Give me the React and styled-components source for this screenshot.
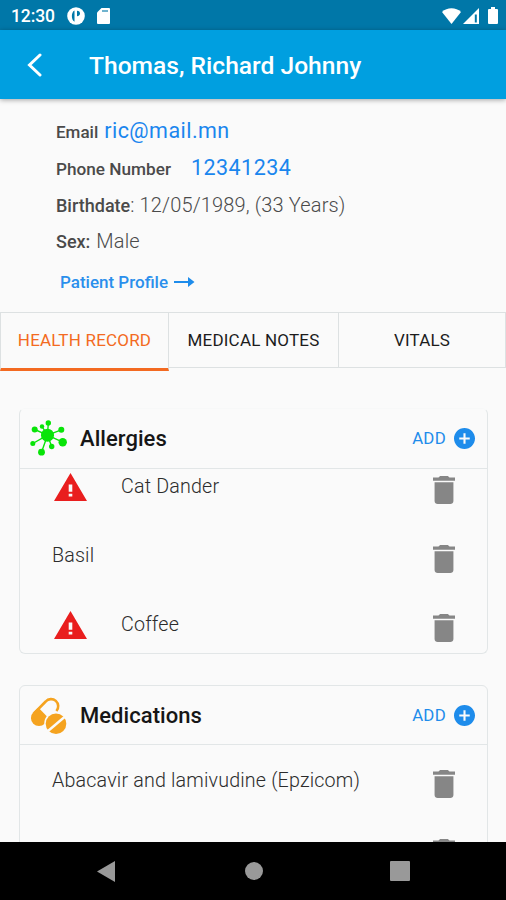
import styled, { createGlobalStyle } from 'styled-components';

const GlobalStyle = createGlobalStyle`
    body {
        margin: 0;
        background-color: #fafafa;
        font-family: Roboto, sans-serif;
    }
`;

const Screen = styled.div`
    display: flex;
    flex-direction: column;
    width: 506px;
    height: 900px;
    overflow: hidden;
    background-color: #fafafa;
`;

const StatusBar = styled.div`
    display: flex;
    align-items: center;
    justify-content: space-between;
    box-sizing: border-box;
    flex: none;
    height: 30px;
    padding: 1px 7px 0 11px;
    background-color: #0077a8;
    color: #fff;
`;

const StatusGroup = styled.div`
    display: flex;
    align-items: center;
    gap: ${props => props.$gap};
`;

const Clock = styled.span`
    font-size: 17.5px;
    font-weight: 500;
    line-height: 28px;
    letter-spacing: -0.1px;
`;

const AppBar = styled.header`
    display: flex;
    align-items: center;
    box-sizing: border-box;
    flex: none;
    height: 69px;
    padding: 1px 0 0 26px;
    gap: 47px;
    background-color: #009fe0;
    box-shadow: 0 1px 5px rgba(0, 0, 0, 0.35);
    color: #fff;
`;

const PatientName = styled.h1`
    margin: 0;
    padding-top: 1px;
    font-size: 24.6px;
    font-weight: 500;
    line-height: 30px;
`;

const Content = styled.main`
    flex: none;
    height: 743px;
    overflow: hidden;
`;

const Details = styled.section`
    display: flex;
    flex-direction: column;
    box-sizing: border-box;
    height: 213px;
    padding: 17px 0 0 56px;
`;

const Detail = styled.div`
    display: flex;
    align-items: baseline;
    height: ${props => props.$height};
    line-height: 30px;
    white-space: pre;
`;

const Label = styled.span`
    font-size: ${props => props.$size || '17px'};
    font-weight: 500;
    color: #4a4a4a;
`;

const Value = styled.span`
    font-size: ${props => (props.$link ? '21.5px' : '20px')};
    font-weight: ${props => (props.$link ? 400 : 300)};
    letter-spacing: ${props => (props.$link ? '0.45px' : '0.15px')};
    color: ${props => (props.$link ? '#1a86ee' : '#4a4a4a')};
    margin-left: ${props => props.$left || '0'};
`;

const ProfileLink = styled.a`
    display: flex;
    align-items: center;
    gap: 6px;
    padding: 0 0 0 4px;
    font-size: 17px;
    font-weight: 500;
    line-height: 30px;
    color: #2a8fec;
`;

const Tabs = styled.nav`
    display: grid;
    grid-template-columns: 169px 170px 167px;
    height: 59px;
`;

const Tab = styled.div`
    box-sizing: border-box;
    height: ${props => (props.$active ? '59px' : '56px')};
    border-top: 1px solid #dde1e2;
    border-right: 1px solid #dde1e2;
    border-left: ${props => (props.$active ? '1px solid #dde1e2' : 'none')};
    border-bottom: ${props => (props.$active ? '3px solid #f36a21' : '1px solid #dde1e2')};
    color: ${props => (props.$active ? '#f36a21' : '#1c1c1c')};
    font-size: 17px;
    line-height: 55px;
    letter-spacing: 0.2px;
    text-align: center;
`;

const Card = styled.section`
    box-sizing: border-box;
    width: 469px;
    height: ${props => props.$height};
    margin: ${props => props.$top} 0 0 19px;
    border: 1px solid #e2e6e7;
    border-top-color: ${props => (props.$openTop ? '#f7f8f8' : '#e2e6e7')};
    border-radius: 6px;
    overflow: hidden;
`;

const CardHeader = styled.div`
    display: flex;
    align-items: center;
    box-sizing: border-box;
    height: ${props => props.$height || '60px'};
    padding: ${props => props.$padTop || '0'} 12px 0 10px;
    border-bottom: 1px solid #e2e6e7;
`;

const CardTitle = styled.h2`
    flex: 1;
    margin: 0 0 0 12px;
    font-size: 22px;
    font-weight: 500;
    line-height: 30px;
    letter-spacing: 0.05px;
    color: #161616;
`;

const AddButton = styled.button`
    display: flex;
    align-items: center;
    gap: 8px;
    padding: 0;
    border: none;
    background: none;
    font-family: inherit;
    font-size: 16.8px;
    line-height: 23px;
    letter-spacing: 0.3px;
    color: #1e8ceb;
`;

const Rows = styled.div`
    padding-top: ${props => props.$top};
`;

const Row = styled.div`
    display: flex;
    align-items: flex-start;
    height: 69px;
    padding: 0 32px 0 ${props => (props.$alert ? '34px' : '32px')};
`;

const AlertSlot = styled.div`
    width: 67px;
    padding-top: 4px;
`;

const RowText = styled.span`
    flex: 1;
    font-size: 19.7px;
    font-weight: 300;
    line-height: 35px;
    letter-spacing: 0.17px;
    color: #2c2c2c;
`;

const TrashSlot = styled.div`
    padding-top: 7px;
`;

const NavBar = styled.footer`
    display: grid;
    grid-template-columns: 212px 83px 209px;
    align-items: center;
    justify-items: center;
    flex: none;
    height: 58px;
    background-color: #000;
`;

const Icon = styled.svg`
    display: block;
    flex: none;
`;

function TrashIcon() {
    return (
        <Icon width="22" height="28" viewBox="5 3 14 18" preserveAspectRatio="none" fill="#868686">
            <path d="M6 19c0 1.1.9 2 2 2h8c1.1 0 2-.9 2-2V7H6v12zM19 4h-3.5l-1-1h-5l-1 1H5v2h14V4z" />
        </Icon>
    );
}

function WarningIcon() {
    return (
        <Icon width="33" height="28" viewBox="1 2 22 19" preserveAspectRatio="none" fill="#e91e1e">
            <path d="M1 21h22L12 2 1 21zm12.2-3h-2.4v-2h2.4v2zm0-3.2h-2.4v-5h2.4v5z" />
        </Icon>
    );
}

function AddIcon() {
    return (
        <Icon width="21" height="21" viewBox="2 2 20 20" fill="#1e8ceb">
            <path d="M12 2C6.48 2 2 6.48 2 12s4.48 10 10 10 10-4.48 10-10S17.52 2 12 2zm5 11h-4v4h-2v-4H7v-2h4V7h2v4h4v2z" />
        </Icon>
    );
}

function AllergyIcon() {
    return (
        <Icon width="38" height="38" viewBox="0 0 38 38" fill="#08e408" stroke="#08e408">
            <path d="M17.5 15.2L18.3 3M17.5 15.2L31.3 9.8M17.5 15.2L32.7 22.2M17.5 15.2L21.7 26.5M17.5 15.2L11.5 32.2M17.5 15.2L2.8 23.5M17.5 15.2L4.7 9.5M17.5 15.2L12 6.5" strokeWidth="1.4" />
            <g stroke="none">
                <circle cx="17.5" cy="15.2" r="6.5" />
                <circle cx="18.3" cy="3" r="2.7" />
                <circle cx="31.3" cy="9.8" r="3" />
                <circle cx="32.7" cy="22.2" r="4.2" />
                <circle cx="21.7" cy="26.5" r="2.7" />
                <circle cx="11.5" cy="32.2" r="3.4" />
                <circle cx="2.8" cy="23.5" r="2.5" />
                <circle cx="4.7" cy="9.5" r="3" />
                <circle cx="12" cy="6.5" r="2.2" />
            </g>
        </Icon>
    );
}

function PillsIcon() {
    return (
        <Icon width="38" height="38" viewBox="0 0 38 38" fill="#f5a31f">
            <path d="M4.2 16.2L15.7 4.5A6.8 6.8 0 0 1 26.4 14" fill="none" stroke="#f5a31f" strokeWidth="2.6" />
            <path d="M3.3 15.3L8.3 10.5L19 21.5L14.7 26.7A8 8 0 0 1 3.3 15.3z" />
            <circle cx="26" cy="26.7" r="11.8" fill="#fafafa" />
            <circle cx="26" cy="26.7" r="10.3" />
            <path d="M18 34L34.5 20" stroke="#fafafa" strokeWidth="2.4" />
        </Icon>
    );
}

function RecordRow({ name, alert }) {
    return (
        <Row $alert={alert}>
            {alert && <AlertSlot><WarningIcon /></AlertSlot>}
            <RowText>{name}</RowText>
            <TrashSlot><TrashIcon /></TrashSlot>
        </Row>
    );
}

function Add() {
    return (
        <AddButton>ADD <AddIcon /></AddButton>
    );
}

function App() {
    return (
        <Screen>
            <GlobalStyle />
            <StatusBar>
                <StatusGroup $gap="12px">
                    <Clock>12:30</Clock>
                    <Icon width="18" height="18" viewBox="0 0 18 18">
                        <circle cx="9" cy="9" r="8.8" fill="#fff" />
                        <path d="M7.5 3.5v11.2C4 13 4 5 7.5 3.5zM10 3.8c4 0 4 5.4 0 5.4z" fill="#0077a8" />
                    </Icon>
                    <Icon width="13" height="16" viewBox="0 0 13 16">
                        <path d="M4.5 0H12a1 1 0 0 1 1 1v14a1 1 0 0 1-1 1H1a1 1 0 0 1-1-1V4.5z" fill="#fff" />
                        <path d="M5 2.2h6v1.6H5z" fill="#0077a8" opacity="0.7" />
                    </Icon>
                </StatusGroup>
                <StatusGroup $gap="2px">
                    <Icon width="19" height="16" viewBox="0 0 19 16" fill="#fff">
                        <path d="M0 4C5-1 14-1 19 4L9.5 16z" />
                    </Icon>
                    <Icon width="16" height="16" viewBox="0 0 16 16">
                        <path d="M0 16L16 0v16z" fill="#fff" />
                        <path d="M11.8 6.5h2v8h-2z" fill="#0077a8" />
                    </Icon>
                    <Icon width="18" height="17" viewBox="0 0 18 17" fill="#fff">
                        <path d="M10 0h4v2h2a1 1 0 0 1 1 1v13a1 1 0 0 1-1 1H8a1 1 0 0 1-1-1V3a1 1 0 0 1 1-1h2z" />
                    </Icon>
                </StatusGroup>
            </StatusBar>
            <AppBar>
                <Icon width="16" height="24" viewBox="0 0 16 24" fill="none" stroke="#fff" strokeWidth="3" strokeLinecap="round">
                    <path d="M14 2L3.5 12 14 22" />
                </Icon>
                <PatientName>Thomas, Richard Johnny</PatientName>
            </AppBar>
            <Content>
                <Details>
                    <Detail $height="37px">
                        <Label>Email</Label>
                        <Value $link $left="6px">ric@mail.mn</Value>
                    </Detail>
                    <Detail $height="37px">
                        <Label $size="17.2px">Phone Number</Label>
                        <Value $link $left="20px">12341234</Value>
                    </Detail>
                    <Detail $height="36px">
                        <Label $size="18px">Birthdate</Label>
                        <Value>: 12/05/1989, (33 Years)</Value>
                    </Detail>
                    <Detail $height="41px">
                        <Label $size="18px">Sex:</Label>
                        <Value $left="6px">Male</Value>
                    </Detail>
                    <ProfileLink>
                        Patient Profile
                        <Icon width="21" height="12" viewBox="0 0 21 12" fill="#1e8ceb">
                            <path d="M0 5h14V1l6.5 5-6.5 5V7H0z" />
                        </Icon>
                    </ProfileLink>
                </Details>
                <Tabs>
                    <Tab $active>HEALTH RECORD</Tab>
                    <Tab>MEDICAL NOTES</Tab>
                    <Tab>VITALS</Tab>
                </Tabs>
                <Card $top="37px" $height="246px" $openTop>
                    <CardHeader>
                        <AllergyIcon />
                        <CardTitle>Allergies</CardTitle>
                        <Add />
                    </CardHeader>
                    <Rows $top="0">
                        <RecordRow name="Cat Dander" alert />
                        <RecordRow name="Basil" />
                        <RecordRow name="Coffee" alert />
                    </Rows>
                </Card>
                <Card $top="31px" $height="230px">
                    <CardHeader $height="59px" $padTop="1px">
                        <PillsIcon />
                        <CardTitle>Medications</CardTitle>
                        <Add />
                    </CardHeader>
                    <Rows $top="18px">
                        <RecordRow name="Abacavir and lamivudine (Epzicom)" />
                        <RecordRow name="" />
                    </Rows>
                </Card>
            </Content>
            <NavBar>
                <Icon width="18" height="21" viewBox="0 0 18 21" fill="#999">
                    <path d="M0 10.5L18 0v21z" />
                </Icon>
                <Icon width="18" height="18" viewBox="0 0 18 18" fill="#999">
                    <circle cx="9" cy="9" r="9" />
                </Icon>
                <Icon width="20" height="20" viewBox="0 0 20 20" fill="#999">
                    <rect width="20" height="20" rx="1" />
                </Icon>
            </NavBar>
        </Screen>
    );
}

export default App;
